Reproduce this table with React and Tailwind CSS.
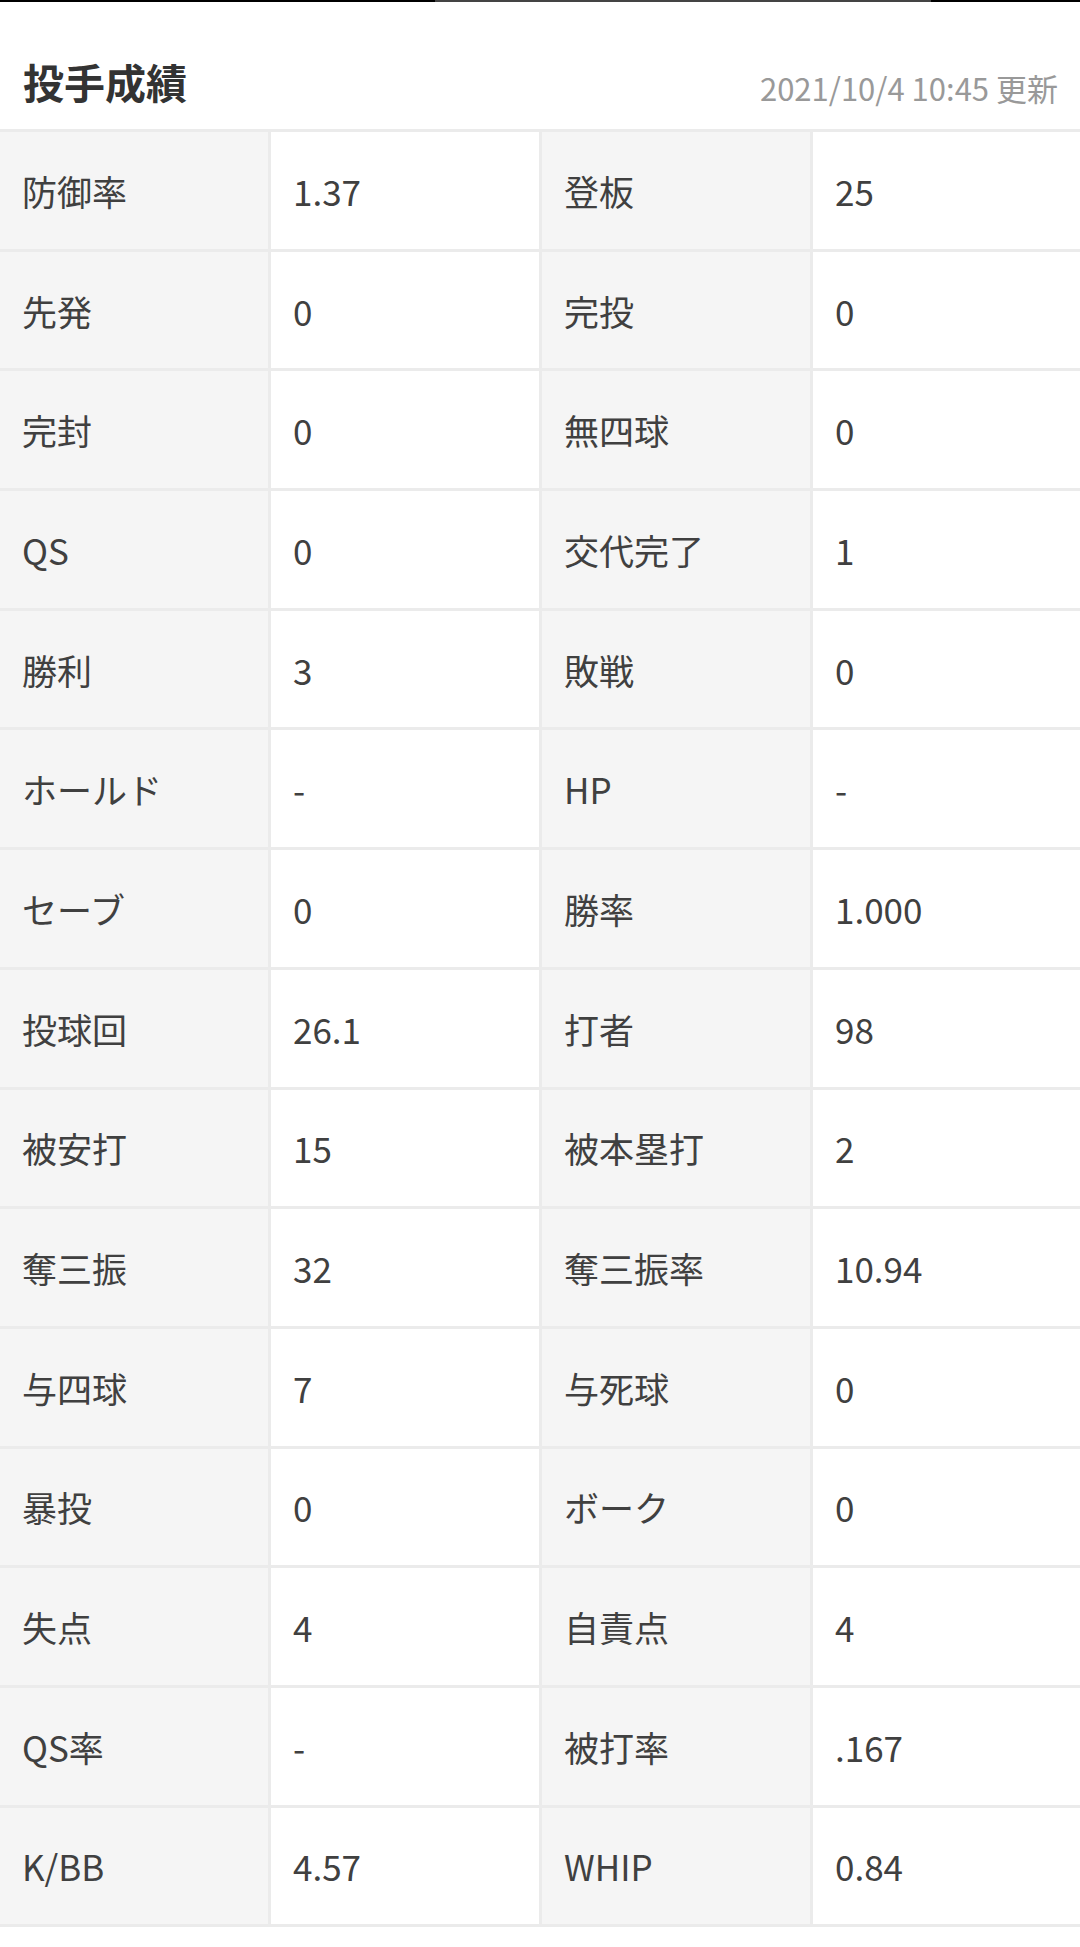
import React from 'react';

const rows = [
  ['防御率', '1.37', '登板', '25'],
  ['先発', '0', '完投', '0'],
  ['完封', '0', '無四球', '0'],
  ['QS', '0', '交代完了', '1'],
  ['勝利', '3', '敗戦', '0'],
  ['ホールド', '-', 'HP', '-'],
  ['セーブ', '0', '勝率', '1.000'],
  ['投球回', '26.1', '打者', '98'],
  ['被安打', '15', '被本塁打', '2'],
  ['奪三振', '32', '奪三振率', '10.94'],
  ['与四球', '7', '与死球', '0'],
  ['暴投', '0', 'ボーク', '0'],
  ['失点', '4', '自責点', '4'],
  ['QS率', '-', '被打率', '.167'],
  ['K/BB', '4.57', 'WHIP', '0.84'],
];

function StatRow({ row }) {
  return (
    <div className="grid grid-cols-[271px_271px_271px_1fr] h-[119.7px] border-b-[3px] border-[#ebebeb]">
      {row.map((text, i) => (
        <div
          key={i}
          className={`flex items-center px-[22px] ${
            i % 2 === 0 ? 'bg-[#f5f5f5]' : 'bg-white'
          } ${i < 3 ? 'border-r-[3px] border-[#ebebeb]' : ''}`}
        >
          {text}
        </div>
      ))}
    </div>
  );
}

export default function App() {
  return (
    <div
      className="w-[1080px] h-[1947px] bg-white text-[#404040] overflow-hidden"
      style={{ fontFamily: '"Noto Sans CJK JP", "Noto Sans", sans-serif' }}
    >
      {/* top edge strip */}
      <div className="flex h-[2px]">
        <div className="w-[435px] bg-black" />
        <div className="w-[496px] bg-[#444]" />
        <div className="flex-1 bg-black" />
      </div>

      {/* header */}
      <div className="flex items-end justify-between h-[127px] pl-[23px] pr-[22px] pb-[16px]">
        <h2 className="text-[41px] font-bold leading-none text-[#333] mb-[11px]">投手成績</h2>
        <span className="text-[31px] leading-none text-[#999] mb-[10px]">2021/10/4 10:45 更新</span>
      </div>

      {/* stats table */}
      <div className="border-t-[3px] border-[#ebebeb] text-[35px] leading-none">
        {rows.map((row, i) => (
          <StatRow key={i} row={row} />
        ))}
      </div>
    </div>
  );
}
